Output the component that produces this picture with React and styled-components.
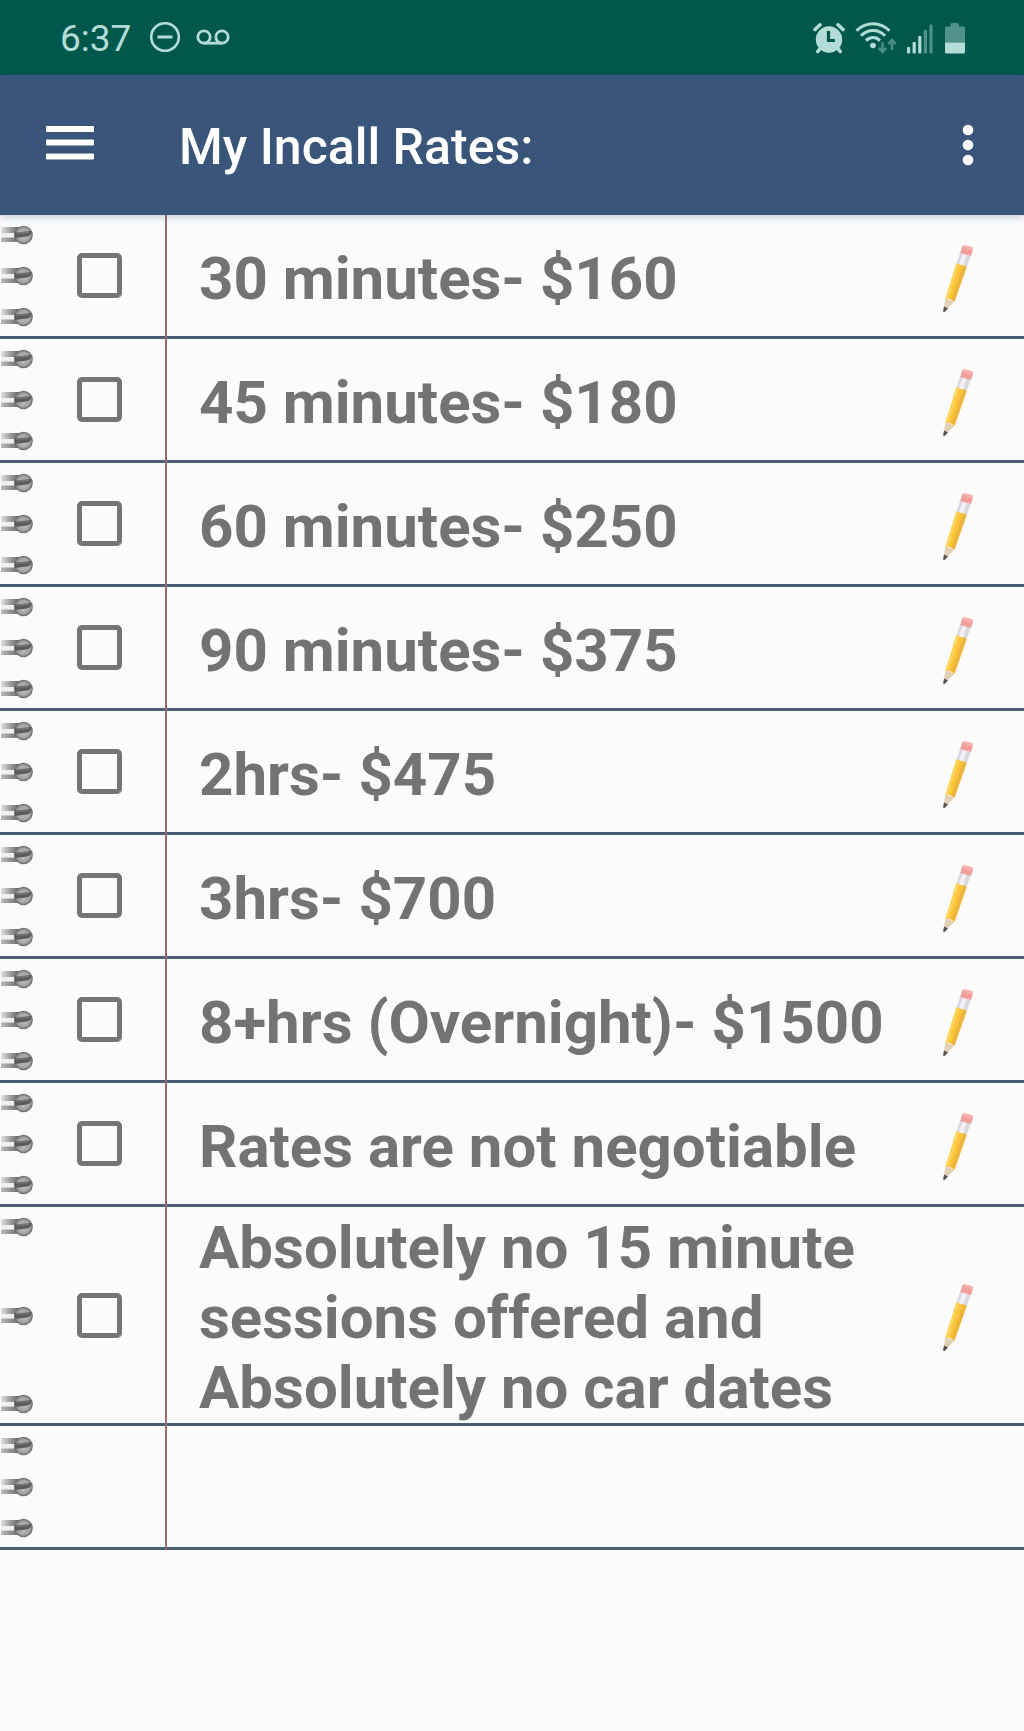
import styled, { createGlobalStyle } from 'styled-components';

const ITEMS = [
  '30 minutes- $160',
  '45 minutes- $180',
  '60 minutes- $250',
  '90 minutes- $375',
  '2hrs- $475',
  '3hrs- $700',
  '8+hrs (Overnight)- $1500',
  'Rates are not negotiable',
  'Absolutely no 15 minute sessions offered and Absolutely no car dates',
];

function DoNotDisturbIcon() {
  return (
    <svg width="32" height="32" viewBox="0 0 32 32" fill="none" stroke="currentColor" aria-hidden="true">
      <circle cx="16" cy="15" r="13.8" strokeWidth="2.6" />
      <path d="M8.5 15h15" strokeWidth="3" />
    </svg>
  );
}

function VoicemailIcon() {
  return (
    <svg width="34" height="18" viewBox="0 0 34 18" fill="none" stroke="currentColor" strokeWidth="2.8" aria-hidden="true">
      <circle cx="8" cy="8" r="6.2" />
      <circle cx="26" cy="8" r="6.2" />
      <path d="M8 14.2h18" />
    </svg>
  );
}

function AlarmIcon() {
  return (
    <svg width="32" height="32" viewBox="0 0 32 32" aria-hidden="true">
      <g stroke="currentColor" strokeLinecap="round" fill="none">
        <path d="M2 7.5 7 2.8M30 7.5 25 2.8" strokeWidth="3.6" />
        <path d="M7.5 26 4.8 29.5M24.5 26l2.7 3.5" strokeWidth="3.6" />
      </g>
      <circle cx="16" cy="17.5" r="13.2" fill="currentColor" />
      <path d="M15.5 9v9.5H22" fill="none" stroke="#00574b" strokeWidth="3.2" />
    </svg>
  );
}

function WifiIcon() {
  return (
    <svg width="41" height="32" viewBox="0 0 41 32" fill="none" aria-hidden="true">
      <g stroke="currentColor" strokeWidth="3">
        <path d="M1.5 8.8C10.5-.6 25.5-.6 34.5 8.8" />
        <path d="M6 13.8c6.800-7 17.200-7 24 0" />
        <path d="M11 18.6c4-4 10-4 14 0" />
      </g>
      <circle cx="18" cy="23.5" r="2.8" fill="currentColor" />
      <g stroke="currentColor" strokeWidth="2.6" opacity="0.4">
        <path d="M27.5 20v9.5M23.8 26l3.7 4 3.7-4" />
        <path d="M37 28v-9.5M33.3 22l3.7-4 3.7 4" />
      </g>
    </svg>
  );
}

function SignalIcon() {
  return (
    <svg width="28" height="32" viewBox="0 0 28 32" fill="currentColor" aria-hidden="true">
      <rect x="1" y="25" width="3.2" height="6.5" rx="1" />
      <rect x="6.6" y="20" width="3.2" height="11.5" rx="1" />
      <rect x="12.2" y="14" width="3.2" height="17.5" rx="1" />
      <rect x="17.8" y="8" width="3.2" height="23.5" rx="1" opacity="0.45" />
      <rect x="23.4" y="2.5" width="3.2" height="29" rx="1" opacity="0.45" />
    </svg>
  );
}

function BatteryIcon() {
  return (
    <svg width="22" height="32" viewBox="0 0 22 32" fill="currentColor" aria-hidden="true">
      <path d="M1 20.5V6q0-1.5 1.5-1.5h4V2.5Q6.5 1 8 1h5.500Q15 1 15 2.5v2h4.5Q21 4.5 21 6v14.5z" opacity="0.45" />
      <path d="M1 20.5h20V30q0 1.5-1.5 1.5h-17Q1 31.5 1 30z" />
    </svg>
  );
}

function MenuIcon() {
  return (
    <svg width="48" height="38" viewBox="0 0 48 38" fill="currentColor" aria-hidden="true">
      <rect x="0" y="0" width="48" height="6" rx="1" />
      <rect x="0" y="13.5" width="48" height="6" rx="1" />
      <rect x="0" y="27.5" width="48" height="6" rx="1" />
    </svg>
  );
}

function MoreIcon() {
  return (
    <svg width="12" height="42" viewBox="0 0 12 42" fill="currentColor" aria-hidden="true">
      <circle cx="6" cy="6" r="5.3" />
      <circle cx="6" cy="21" r="5.3" />
      <circle cx="6" cy="36" r="5.3" />
    </svg>
  );
}

function PencilIcon() {
  return (
    <svg width="32" height="68" viewBox="0 0 32 68" aria-hidden="true">
      <path d="M3.5 53.5 1.3 65.5Q1.5 67.5 3.3 66L12.5 56.5z" fill="#e0cfb2" />
      <path d="M2 61.5 1.2 66Q1.3 67.8 3.2 66.4L6 63.4z" fill="#5c5052" />
      <path d="M3.5 53.5 14.5 18l10.3 3.6L12.5 56.5 8 54z" fill="#fbc63c" />
      <path d="M21 20.3 24.8 21.6 12.5 56.5 9 54.5z" fill="#eeb53a" />
      <path d="M3.5 53.5 14.5 18l3 1L6.5 53z" fill="#fdd35a" />
      <path d="M14.5 18 18.2 7.5l10.6 3.3L24.8 21.6z" fill="#d9d9e0" />
      <path d="M17 19 20.8 8.3l4 1.2L21 20.3z" fill="#f0f0f4" />
      <path d="M18.2 8 20.3 1.8Q21 0 23 .4l6.5 1.7Q31.5 2.7 31 4.7L29 11z" fill="#f2a09b" />
      <path d="M20.3 1.8Q21 0 23 .4l6.5 1.7Q31.5 2.7 31 4.7L30.5 6z" fill="#f8b2ad" />
    </svg>
  );
}

function Ring() {
  return (
    <svg width="33" height="20" viewBox="0 0 33 20" aria-hidden="true">
      <path d="M1 2h19v6H1z" fill="url(#wireTop)" />
      <path d="M1 8h14v4.5H1z" fill="#f0f0f0" />
      <path d="M1 12.5h18V17H1z" fill="url(#wireBottom)" />
      <circle cx="23.5" cy="10" r="9.3" fill="url(#bead)" />
      <path d="M14.5 7.5 31.5 6Q32 9.5 27 11.5L14.5 13z" fill="#5c5c5c" />
      <path d="M16 7.6 29 6.5V8L16 9z" fill="#777" />
    </svg>
  );
}

function RingPaint() {
  return (
    <PaintDefs aria-hidden="true">
      <defs>
        <linearGradient id="wireTop">
          <stop offset="0" stopColor="#e2e2e2" />
          <stop offset="0.5" stopColor="#9c9c9c" />
          <stop offset="1" stopColor="#5e5e5e" />
        </linearGradient>
        <linearGradient id="wireBottom">
          <stop offset="0" stopColor="#bbb" />
          <stop offset="1" stopColor="#6c6c6c" />
        </linearGradient>
        <radialGradient id="bead" cx="0.5" cy="0.5" r="0.5">
          <stop offset="0" stopColor="#c4c4c4" />
          <stop offset="0.7" stopColor="#a4a4a4" />
          <stop offset="1" stopColor="#666" />
        </radialGradient>
      </defs>
    </PaintDefs>
  );
}

function Binding() {
  return (
    <Rings>
      <Ring />
      <Ring />
      <Ring />
    </Rings>
  );
}

function NoteRow({ id, text }) {
  return (
    <Row>
      <Binding />
      <CheckCell>
        <Checkbox id={id} />
      </CheckCell>
      <RowLabel htmlFor={id}>{text}</RowLabel>
      <EditButton aria-label={`Edit ${text}`}>
        <PencilIcon />
      </EditButton>
    </Row>
  );
}

function App() {
  return (
    <>
      <GlobalStyle />
      <RingPaint />
      <StatusBar>
        <StatusGroup>
          <Time>6:37</Time>
          <DoNotDisturbIcon />
          <VoicemailIcon />
        </StatusGroup>
        <StatusGroup $tight>
          <AlarmIcon />
          <WifiIcon />
          <SignalIcon />
          <BatteryIcon />
        </StatusGroup>
      </StatusBar>
      <AppBar>
        <BarButton aria-label="Open menu">
          <MenuIcon />
        </BarButton>
        <Title>My Incall Rates:</Title>
        <BarButton aria-label="More options">
          <MoreIcon />
        </BarButton>
      </AppBar>
      <Notebook>
        {ITEMS.map((text, index) => (
          <NoteRow key={text} id={`item-${index}`} text={text} />
        ))}
        <Row>
          <Binding />
        </Row>
      </Notebook>
    </>
  );
}

const GlobalStyle = createGlobalStyle`
  *,
  *::before,
  *::after {
    box-sizing: border-box;
  }

  body {
    margin: 0;
    background: #fbfbfb;
    font-family: Roboto, 'Liberation Sans', sans-serif;
  }

  svg {
    display: block;
    flex-shrink: 0;
  }
`;

const PaintDefs = styled.svg`
  position: absolute;
  width: 0;
  height: 0;
`;

const StatusBar = styled.div`
  display: flex;
  justify-content: space-between;
  align-items: center;
  height: 75px;
  padding: 0 58px 0 60px;
  background: #00574b;
  color: #b2dcd5;
`;

const StatusGroup = styled.div`
  display: flex;
  align-items: center;
  gap: ${({ $tight }) => ($tight ? '10px' : '15px')};
`;

const Time = styled.span`
  padding: 2px 3px 0 0;
  font-size: 37px;
  line-height: 40px;
`;

const AppBar = styled.header`
  position: relative;
  z-index: 1;
  display: flex;
  align-items: center;
  height: 140px;
  padding: 0 8px 0 22px;
  background: #395579;
  color: white;
  box-shadow: 0 2px 8px rgba(57, 85, 121, 0.3);
`;

const BarButton = styled.button`
  display: flex;
  align-items: center;
  justify-content: center;
  width: 96px;
  height: 96px;
  padding: 0;
  border: 0;
  background: none;
  color: inherit;
  cursor: pointer;
`;

const Title = styled.h1`
  flex: 1;
  margin: 0;
  padding: 4px 0 0 61px;
  font-size: 50px;
  font-weight: 500;
  line-height: 60px;
`;

const Notebook = styled.ul`
  position: relative;
  margin: 0;
  padding: 0;
  list-style: none;

  /* red margin rule, drawn over the row lines */
  &::after {
    content: '';
    position: absolute;
    top: 0;
    bottom: 0;
    left: 165px;
    width: 2px;
    background: #9a6c70;
    pointer-events: none;
  }
`;

const Row = styled.li`
  display: grid;
  grid-template-columns: 34px 130px minmax(0, 1fr) 132px;
  min-height: 124px;
  border-bottom: 3px solid #4a5d72;
`;

const Rings = styled.div`
  display: flex;
  flex-direction: column;
  justify-content: space-between;
  padding: 10px 0 9px;
`;

const CheckCell = styled.div`
  display: flex;
  align-items: center;
  justify-content: center;
`;

const Checkbox = styled.input.attrs({ type: 'checkbox' })`
  appearance: none;
  width: 45px;
  height: 45px;
  margin: 0;
  border: 5px solid #757575;
  border-radius: 5px;
  cursor: pointer;

  &:checked {
    background: #757575;
  }
`;

const RowLabel = styled.label`
  align-self: center;
  padding: 6px 0 0 35px;
  color: #737373;
  font-size: 60px;
  font-weight: 700;
  line-height: 70px;
`;

const EditButton = styled.button`
  display: flex;
  align-items: center;
  justify-content: center;
  padding: 6px 0 0;
  border: 0;
  background: none;
  cursor: pointer;
`;

export default App;
